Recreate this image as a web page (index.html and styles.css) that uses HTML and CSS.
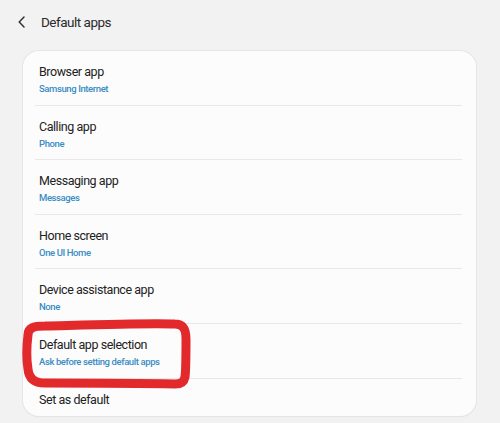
FILE: index.html
```html
<!DOCTYPE html>
<html lang="en">
<head>
    <meta charset="UTF-8">
    <meta name="viewport" content="width=device-width, initial-scale=1.0">
    <title>Default apps</title>
    <link rel="stylesheet" href="styles.css">
</head>
<body>

    <div class="header">
        <svg class="back" width="10" height="14" viewBox="0 0 10 14">
            <path d="M7 2 L2.2 7 L7 12" fill="none" stroke="#333" stroke-width="1.5" stroke-linecap="round" stroke-linejoin="round"/>
        </svg>
        <h1>Default apps</h1>
    </div>

    <div class="card">
        <div class="row">
            <div class="title">Browser app</div>
            <div class="sub">Samsung Internet</div>
        </div>
        <div class="row">
            <div class="title">Calling app</div>
            <div class="sub">Phone</div>
        </div>
        <div class="row">
            <div class="title">Messaging app</div>
            <div class="sub">Messages</div>
        </div>
        <div class="row">
            <div class="title">Home screen</div>
            <div class="sub">One UI Home</div>
        </div>
        <div class="row">
            <div class="title">Device assistance app</div>
            <div class="sub">None</div>
        </div>
        <div class="row marked">
            <div class="title">Default app selection</div>
            <div class="sub">Ask before setting default apps</div>
            <!-- red marker scribble drawn over the row -->
            <svg class="scribble" width="185" height="85" viewBox="0 0 185 85">
                <path d="M13 24 C13 17 18 15 30 15 C70 14 130 12 160 13 C168 13 171 18 171 28 C171 44 171 58 170 66 C169 71 166 73 160 73 C120 72 60 72 30 72 C20 72 14 68 13 58 C11 46 12 32 13 24 Z"
                      fill="none" stroke="#e2292b" stroke-width="9" stroke-linecap="round" stroke-linejoin="round"/>
            </svg>
        </div>
        <div class="row last">
            <div class="title">Set as default</div>
        </div>
    </div>

</body>
</html>
```

FILE: styles.css
```css
body {
    margin: 0;
    background-color: #f2f2f2;
    font-family: Roboto, "Liberation Sans", sans-serif;
    color: #222;
    width: 500px;
    height: 423px;
    overflow: hidden;
}
.header {
    display: flex;
    align-items: center;
    height: 44px;
    padding-left: 17px;
}
.back {
    margin-right: 14px;
}
h1 {
    margin: 0;
    font-size: 13.5px;
    letter-spacing: -0.5px;
    font-weight: normal;
    color: #2a2a2a;
}
.card {
    margin: 7px 24px 0 23px;
    background-color: #fcfcfc;
    border-radius: 16px;
    box-shadow: 0 0 0 1px #e6e6e6, 0 1px 2px rgba(0, 0, 0, 0.06);
    padding: 0 14px 0 12px;
}
.row {
    position: relative;
    height: 54.6px;
    box-sizing: border-box;
    padding: 13px 0 0 4px;
    border-bottom: 1px solid #e8e8e8;
}
.row.last {
    height: 37px;
    border-bottom: none;
}
.title {
    font-size: 12.5px;
    letter-spacing: -0.45px;
    line-height: 16px;
    color: #222;
}
.sub {
    font-size: 9.5px;
    font-weight: 500;
    letter-spacing: -0.4px;
    line-height: 14px;
    margin-top: 2px;
    color: #3a8cc4;
}
.scribble {
    position: absolute;
    left: -20px;
    top: -13px;
}
```
